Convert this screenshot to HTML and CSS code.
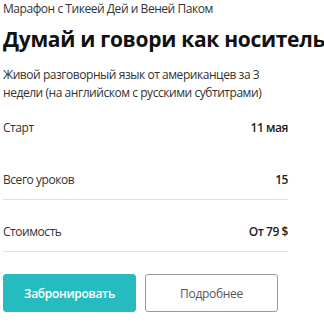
FILE: index.html
```html
<!DOCTYPE html>
<html lang="ru">
<head>
<meta charset="utf-8">
<link rel="stylesheet" href="styles.css">
</head>
<body>
<div class="page">
  <div class="author">Марафон с Тикеей Дей и Веней Паком</div>
  <h1 class="title">Думай и говори как носитель</h1>
  <p class="desc">Живой разговорный язык от американцев за 3 недели (на английском с русскими субтитрами)</p>
  <div class="info">
    <div class="row first"><span class="label">Старт</span><span class="value">11 мая</span></div>
    <div class="row"><span class="label">Всего уроков</span><span class="value">15</span></div>
    <div class="row"><span class="label">Стоимость</span><span class="value">От 79 $</span></div>
  </div>
  <div class="actions">
    <button class="btn primary">Забронировать</button>
    <button class="btn secondary">Подробнее</button>
  </div>
</div>
</body>
</html>
```
FILE: styles.css
```css
html, body {
  margin: 0;
  padding: 0;
  background: #fff;
}
.page {
  width: 285px;
  padding: 0 0 0 3px;
  font-family: "Open Sans", sans-serif;
  font-size: 12px;
  letter-spacing: -0.45px;
  color: #222;
}
.author {
  line-height: 18px;
  color: #333;
}
.title {
  font-weight: 700;
  font-size: 21px;
  line-height: 28px;
  margin: 7px 0 0;
  white-space: nowrap;
  color: #111;
  letter-spacing: -0.3px;
}
.desc {
  line-height: 18px;
  margin: 13px 0 0;
  color: #333;
  width: 262px;
}
.row {
  display: flex;
  justify-content: space-between;
  align-items: center;
  line-height: 18px;
  padding: 23px 0 10px;
  border-bottom: 1px solid #e2e2e2;
}
.row.first {
  padding-top: 17px;
  border-bottom-color: transparent;
}
.label {
  color: #333;
}
.value {
  font-weight: 600;
  color: #222;
}
.actions {
  display: flex;
  gap: 9px;
  margin-top: 22px;
}
.btn {
  width: 133px;
  height: 38px;
  padding: 0;
  border-radius: 3px;
  font-family: "Open Sans", sans-serif;
  font-size: 12px;
  letter-spacing: -0.3px;
  cursor: pointer;
}
.primary {
  background: #26bcbf;
  border: 1px solid #26bcbf;
  color: #fff;
  font-weight: 600;
}
.secondary {
  background: #fff;
  border: 1px solid #9a9a9a;
  color: #555;
  font-weight: 500;
}
```
